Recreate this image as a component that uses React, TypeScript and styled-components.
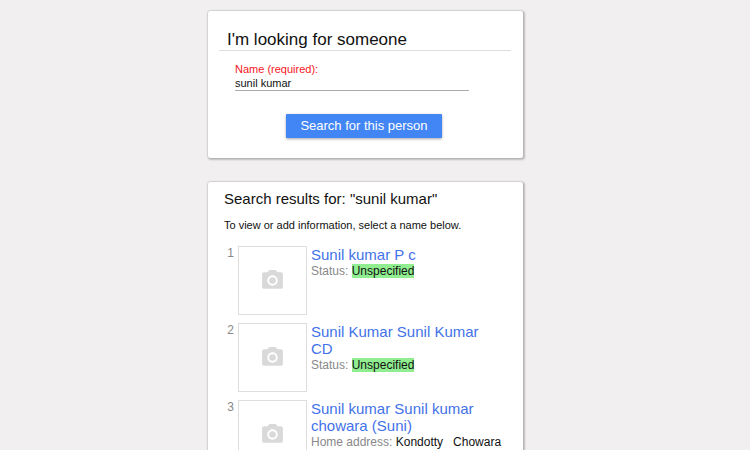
import React, { useState } from "react";
import styled, { createGlobalStyle } from "styled-components";

const GlobalStyle = createGlobalStyle`
  *, *::before, *::after { box-sizing: border-box; }
  body {
    margin: 0;
    background: #f1eff0;
    color: #111;
    font-family: "Liberation Sans", Arial, Helvetica, sans-serif;
  }
`;

const Page = styled.main`
  display: flex;
  flex-direction: column;
  align-items: center;
  gap: 24px;
  min-height: 100vh;
  padding: 11px 35px 0 16px;
`;

const Card = styled.section`
  width: 100%;
  max-width: 315px;
  background: #fff;
  border-radius: 2px;
  box-shadow: 0 0 2px rgba(0, 0, 0, 0.25), 1px 1px 2px 1px rgba(0, 0, 0, 0.2);
`;

const SearchCard = styled(Card)`
  padding: 18px 12px 20px 11px;
`;

const ResultsCard = styled(Card)`
  padding: 8px 16px 24px;
`;

const FormTitle = styled.h1`
  margin: 0;
  padding: 0 8px;
  border-bottom: 1px solid #ddd;
  font-size: 17px;
  font-weight: 400;
  line-height: 21px;
`;

const SearchForm = styled.form`
  display: flex;
  flex-direction: column;
  padding: 12px 42px 0 16px;
`;

const FieldLabel = styled.label`
  color: #f5161d;
  font-size: 11px;
  line-height: 13px;
`;

const NameInput = styled.input`
  width: 100%;
  height: 15px;
  padding: 0 0 1px;
  border: 0;
  border-bottom: 1px solid #aaa;
  border-radius: 0;
  outline: 0;
  background: transparent;
  color: #111;
  font-family: inherit;
  font-size: 11px;
`;

const SearchButton = styled.button`
  align-self: center;
  height: 24px;
  margin: 23px 0 0 24px;
  padding: 0 14px 2px;
  border: 0;
  border-radius: 1px;
  background: #4285f4;
  box-shadow: 0 1px 3px rgba(0, 0, 0, 0.35);
  color: #fff;
  font-family: inherit;
  font-size: 13px;
  white-space: nowrap;
`;

const ResultsTitle = styled.h2`
  margin: 0;
  font-size: 15px;
  font-weight: 400;
  line-height: 18px;
`;

const Hint = styled.p`
  margin: 9px 0 13px;
  font-size: 11px;
  line-height: 16px;
`;

const ResultList = styled.ol`
  display: flex;
  flex-direction: column;
  gap: 8px;
  margin: 0;
  padding: 0;
  list-style: none;
`;

const ResultRow = styled.li`
  display: grid;
  grid-template-columns: 10px 69px minmax(0, 1fr);
  column-gap: 4px;
  min-height: 69px;
`;

const Rank = styled.span`
  color: #888;
  font-size: 12px;
  line-height: 14px;
  text-align: right;
`;

const Photo = styled.div`
  display: flex;
  align-items: center;
  justify-content: center;
  height: 69px;
  border: 1px solid #ddd;
  color: #d9d9d9;
`;

const Details = styled.div`
  padding-right: 16px;
`;

const NameLink = styled.a`
  display: block;
  color: #4272e8;
  font-size: 15px;
  line-height: 17px;
  text-decoration: none;
`;

const Fact = styled.div`
  margin-top: 1px;
  color: #888;
  font-size: 12px;
  line-height: 14px;
  white-space: pre;
`;

const FactValue = styled.span<{ $highlight?: boolean }>`
  background: ${(p) => (p.$highlight ? "#90ee90" : "transparent")};
  color: #111;
`;

interface Person {
  name: string;
  label: string;
  value: string;
  highlight?: boolean;
}

const people: Person[] = [
  { name: "Sunil kumar P c", label: "Status:", value: "Unspecified", highlight: true },
  { name: "Sunil Kumar Sunil Kumar CD", label: "Status:", value: "Unspecified", highlight: true },
  { name: "Sunil kumar Sunil kumar chowara (Suni)", label: "Home address:", value: "Kondotty   Chowara" },
];

function CameraIcon() {
  return (
    <svg width="25" height="25" viewBox="0 0 24 24" fill="currentColor" aria-hidden="true">
      <circle cx="12" cy="12" r="3.2" />
      <path d="M9 2 7.17 4H4c-1.1 0-2 .9-2 2v12c0 1.1.9 2 2 2h16c1.1 0 2-.9 2-2V6c0-1.1-.9-2-2-2h-3.17L15 2H9zm3 15c-2.76 0-5-2.24-5-5s2.24-5 5-5 5 2.24 5 5-2.24 5-5 5z" />
    </svg>
  );
}

export default function App() {
  const [name, setName] = useState("sunil kumar");
  return (
    <>
      <GlobalStyle />
      <Page>
        <SearchCard>
          <FormTitle>I'm looking for someone</FormTitle>
          <SearchForm onSubmit={(e) => e.preventDefault()}>
            <FieldLabel htmlFor="person-name">Name (required):</FieldLabel>
            <NameInput
              id="person-name"
              type="text"
              required
              value={name}
              onChange={(e) => setName(e.target.value)}
            />
            <SearchButton type="submit">Search for this person</SearchButton>
          </SearchForm>
        </SearchCard>
        <ResultsCard>
          <ResultsTitle>Search results for: "sunil kumar"</ResultsTitle>
          <Hint>To view or add information, select a name below.</Hint>
          <ResultList>
            {people.map((person, i) => (
              <ResultRow key={person.name}>
                <Rank>{i + 1}</Rank>
                <Photo>
                  <CameraIcon />
                </Photo>
                <Details>
                  <NameLink href="#">{person.name}</NameLink>
                  <Fact>
                    {person.label} <FactValue $highlight={person.highlight}>{person.value}</FactValue>
                  </Fact>
                </Details>
              </ResultRow>
            ))}
          </ResultList>
        </ResultsCard>
      </Page>
    </>
  );
}
